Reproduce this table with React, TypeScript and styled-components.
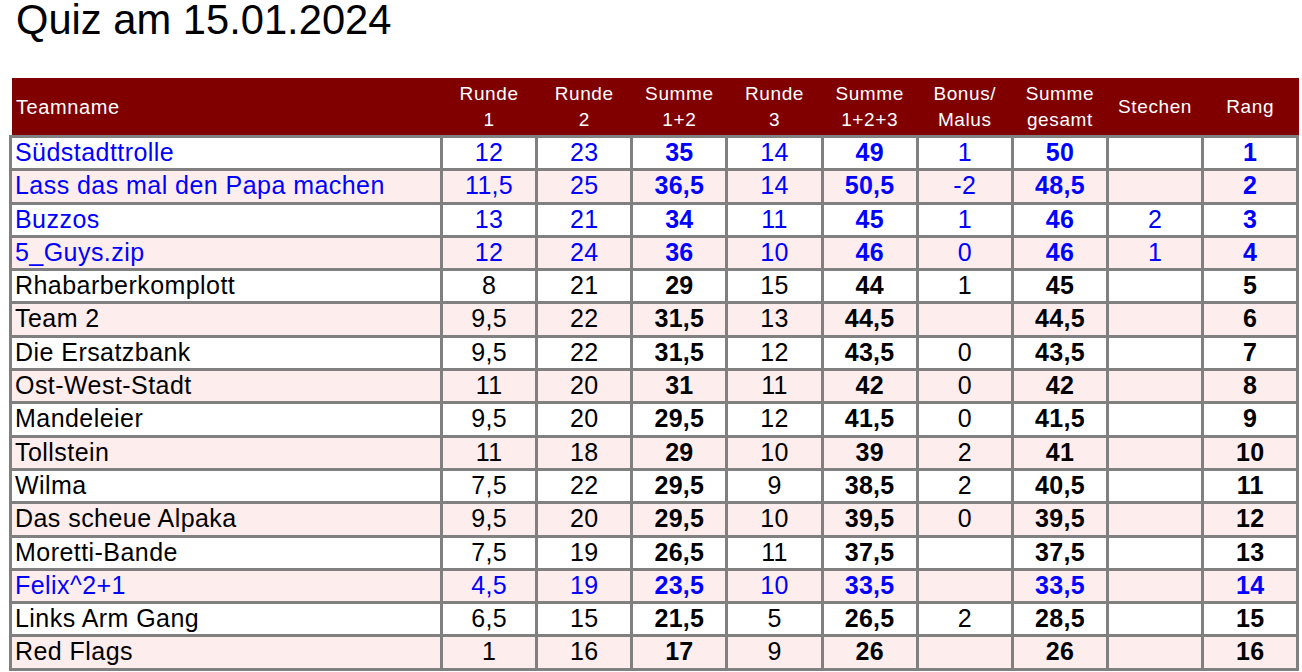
import styled, { createGlobalStyle } from 'styled-components';

// One team's line on the score sheet. Empty strings are blank cells.
interface TeamRow {
  name: string;
  r1: string;
  r2: string;
  sum12: string;
  r3: string;
  sum123: string;
  bonus: string;
  total: string;
  tiebreak: string;
  rank: string;
  highlight?: boolean;
}

const ROWS: TeamRow[] = [
  { name: 'Südstadttrolle', r1: '12', r2: '23', sum12: '35', r3: '14', sum123: '49', bonus: '1', total: '50', tiebreak: '', rank: '1', highlight: true },
  { name: 'Lass das mal den Papa machen', r1: '11,5', r2: '25', sum12: '36,5', r3: '14', sum123: '50,5', bonus: '-2', total: '48,5', tiebreak: '', rank: '2', highlight: true },
  { name: 'Buzzos', r1: '13', r2: '21', sum12: '34', r3: '11', sum123: '45', bonus: '1', total: '46', tiebreak: '2', rank: '3', highlight: true },
  { name: '5_Guys.zip', r1: '12', r2: '24', sum12: '36', r3: '10', sum123: '46', bonus: '0', total: '46', tiebreak: '1', rank: '4', highlight: true },
  { name: 'Rhabarberkomplott', r1: '8', r2: '21', sum12: '29', r3: '15', sum123: '44', bonus: '1', total: '45', tiebreak: '', rank: '5' },
  { name: 'Team 2', r1: '9,5', r2: '22', sum12: '31,5', r3: '13', sum123: '44,5', bonus: '', total: '44,5', tiebreak: '', rank: '6' },
  { name: 'Die Ersatzbank', r1: '9,5', r2: '22', sum12: '31,5', r3: '12', sum123: '43,5', bonus: '0', total: '43,5', tiebreak: '', rank: '7' },
  { name: 'Ost-West-Stadt', r1: '11', r2: '20', sum12: '31', r3: '11', sum123: '42', bonus: '0', total: '42', tiebreak: '', rank: '8' },
  { name: 'Mandeleier', r1: '9,5', r2: '20', sum12: '29,5', r3: '12', sum123: '41,5', bonus: '0', total: '41,5', tiebreak: '', rank: '9' },
  { name: 'Tollstein', r1: '11', r2: '18', sum12: '29', r3: '10', sum123: '39', bonus: '2', total: '41', tiebreak: '', rank: '10' },
  { name: 'Wilma', r1: '7,5', r2: '22', sum12: '29,5', r3: '9', sum123: '38,5', bonus: '2', total: '40,5', tiebreak: '', rank: '11' },
  { name: 'Das scheue Alpaka', r1: '9,5', r2: '20', sum12: '29,5', r3: '10', sum123: '39,5', bonus: '0', total: '39,5', tiebreak: '', rank: '12' },
  { name: 'Moretti-Bande', r1: '7,5', r2: '19', sum12: '26,5', r3: '11', sum123: '37,5', bonus: '', total: '37,5', tiebreak: '', rank: '13' },
  { name: 'Felix^2+1', r1: '4,5', r2: '19', sum12: '23,5', r3: '10', sum123: '33,5', bonus: '', total: '33,5', tiebreak: '', rank: '14', highlight: true },
  { name: 'Links Arm Gang', r1: '6,5', r2: '15', sum12: '21,5', r3: '5', sum123: '26,5', bonus: '2', total: '28,5', tiebreak: '', rank: '15' },
  { name: 'Red Flags', r1: '1', r2: '16', sum12: '17', r3: '9', sum123: '26', bonus: '', total: '26', tiebreak: '', rank: '16' },
];

// Numeric columns in sheet order; sums and the rank are printed bold.
const COLUMNS: { key: keyof TeamRow; label: string[]; bold?: boolean }[] = [
  { key: 'r1', label: ['Runde', '1'] },
  { key: 'r2', label: ['Runde', '2'] },
  { key: 'sum12', label: ['Summe', '1+2'], bold: true },
  { key: 'r3', label: ['Runde', '3'] },
  { key: 'sum123', label: ['Summe', '1+2+3'], bold: true },
  { key: 'bonus', label: ['Bonus/', 'Malus'] },
  { key: 'total', label: ['Summe', 'gesamt'], bold: true },
  { key: 'tiebreak', label: ['Stechen'] },
  { key: 'rank', label: ['Rang'], bold: true },
];

export default function App() {
  return (
    <>
      <GlobalStyle />
      <Page>
        <Title>Quiz am 15.01.2024</Title>
        <Sheet>
          <HeadRow>
            <HeadCell $align="left">Teamname</HeadCell>
            {COLUMNS.map(c => (
              <HeadCell key={c.key}>
                {c.label.map(line => (
                  <span key={line}>{line}</span>
                ))}
              </HeadCell>
            ))}
          </HeadRow>
          <Body>
            {ROWS.map((r, i) => (
              <Row key={r.name} $shaded={i % 2 === 1} $highlight={r.highlight}>
                <NameCell>{r.name}</NameCell>
                {COLUMNS.map(c => (
                  <NumCell key={c.key} $bold={c.bold}>
                    {r[c.key] as string}
                  </NumCell>
                ))}
              </Row>
            ))}
          </Body>
        </Sheet>
      </Page>
    </>
  );
}

// ── Styled ───────────────────────────────────────────────────────────────────

const GRID = '431px repeat(9, 95.15px)';
const LINE = '#808080';

const GlobalStyle = createGlobalStyle`
  html, body {
    margin: 0;
    padding: 0;
    background: #ffffff;
    font-family: 'Liberation Sans', Arial, sans-serif;
  }
  *, *::before, *::after { box-sizing: border-box; }
`;

const Page = styled.div`
  display: flex;
  flex-direction: column;
  gap: 38px;
  padding-left: 9px;
  width: 1302px;
  height: 672px;
  overflow: hidden;
`;

const Title = styled.h1`
  margin: 0 0 0 7px;
  font-size: 41.7px;
  font-weight: 400;
  line-height: 40px;
  color: #000000;
`;

const Sheet = styled.div`
  display: flex;
  flex-direction: column;
  width: fit-content;
`;

const HeadRow = styled.div`
  display: grid;
  grid-template-columns: ${GRID};
  height: 57px;
  margin-left: 3px;
  background: #800000;
`;

const HeadCell = styled.div<{ $align?: 'left' | 'center' }>`
  display: flex;
  flex-direction: column;
  justify-content: center;
  align-items: ${p => (p.$align === 'left' ? 'flex-start' : 'center')};
  padding: 0 ${p => (p.$align === 'left' ? '0' : '3px')} 0 ${p => (p.$align === 'left' ? '4px' : '0')};
  color: #ffffff;
  font-size: ${p => (p.$align === 'left' ? '20px' : '19px')};
  line-height: 26px;
  letter-spacing: 0.6px;
  white-space: nowrap;
`;

const Body = styled.div`
  display: flex;
  flex-direction: column;
  border-top: 3px solid ${LINE};
`;

const Row = styled.div<{ $shaded?: boolean; $highlight?: boolean }>`
  display: grid;
  grid-template-columns: 434px repeat(9, 95.15px);
  height: 33.3px;
  background: ${p => (p.$shaded ? '#fdeded' : '#ffffff')};
  color: ${p => (p.$highlight ? '#0000ff' : '#000000')};
  font-size: 25px;
  line-height: 24px;
`;

const NameCell = styled.div`
  padding: 2px 0 0 3px;
  border-left: 3px solid ${LINE};
  border-right: 3px solid ${LINE};
  border-bottom: 3px solid ${LINE};
  letter-spacing: 0.45px;
  white-space: nowrap;
  overflow: hidden;
`;

const NumCell = styled.div<{ $bold?: boolean }>`
  padding-top: 2px;
  border-right: 3px solid ${LINE};
  border-bottom: 3px solid ${LINE};
  text-align: center;
  font-weight: ${p => (p.$bold ? 700 : 400)};
  letter-spacing: 0.3px;
  white-space: nowrap;
`;
